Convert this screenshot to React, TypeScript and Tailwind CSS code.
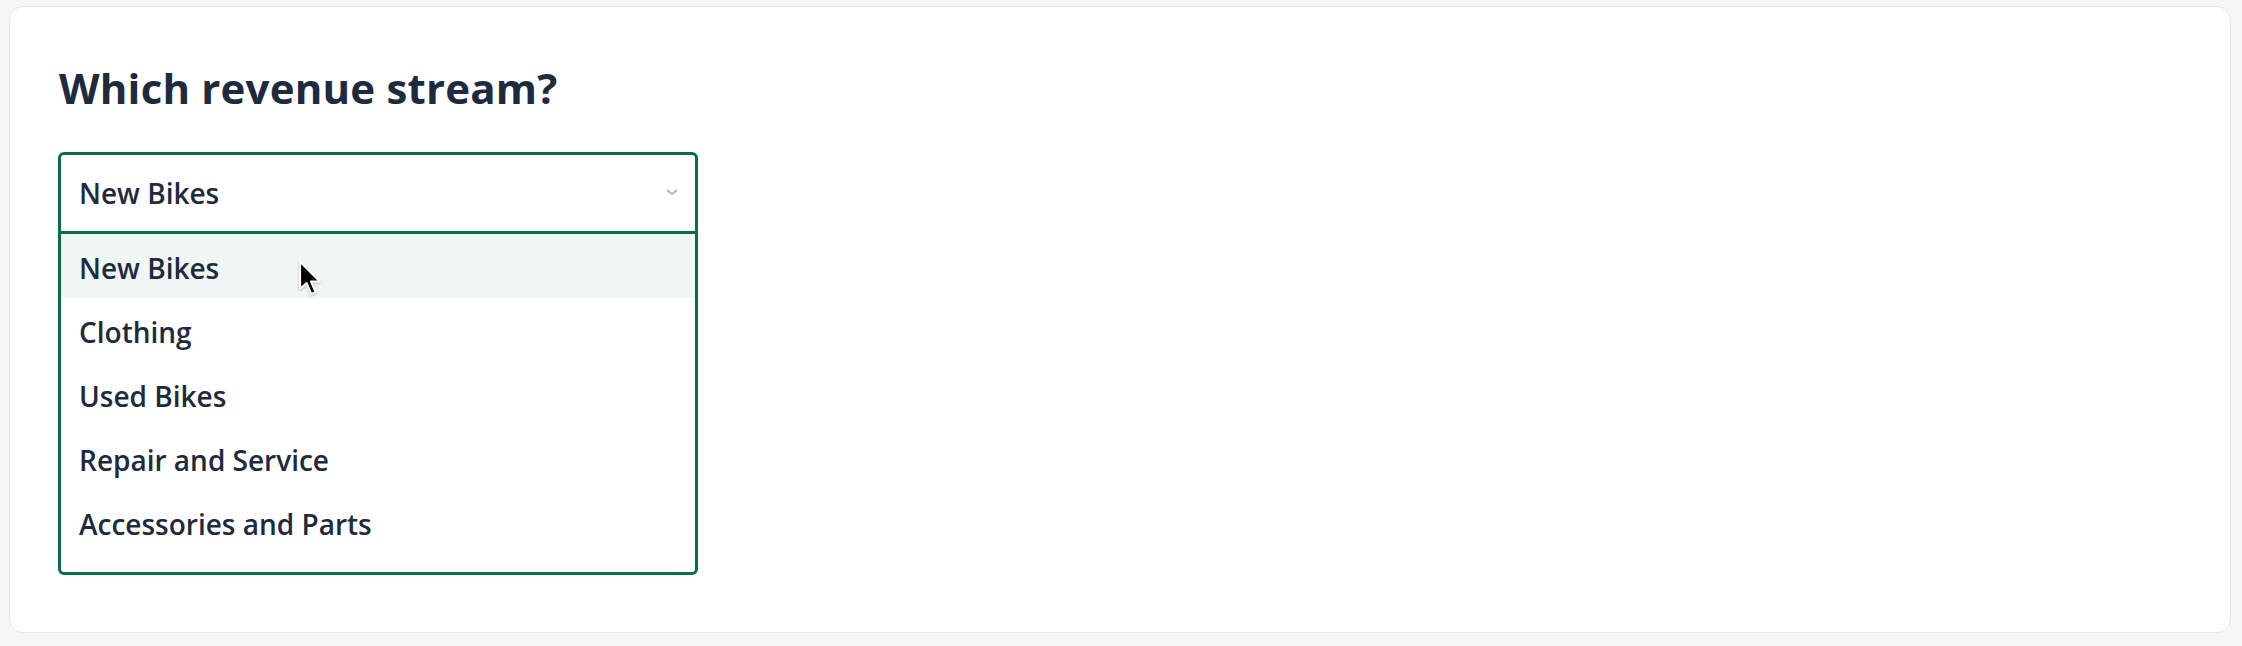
import React from "react";

const items = ["New Bikes", "Clothing", "Used Bikes", "Repair and Service", "Accessories and Parts"];

function Cursor() {
  return (
    <svg width="24" height="36" viewBox="0 0 13 20" className="absolute left-[237px] top-[26px]" style={{ filter: "drop-shadow(0.5px 1px 1px rgba(0,0,0,0.25))" }}>
      <polygon points="1,1 1,16 4.6,12.8 7.2,18.8 9.6,17.8 7,11.9 11.8,11.9" fill="#000" stroke="#fff" strokeWidth="1.1" strokeLinejoin="round" />
    </svg>
  );
}

export default function App() {
  return (
    <div className="w-[2242px] h-[646px] bg-[#f5f7f6] pt-[6px] pl-[9px]" style={{ fontFamily: "'Open Sans', 'Noto Sans', sans-serif" }}>
      <div className="w-[2222px] h-[627px] bg-white border border-[#e4e7e6] rounded-[14px] pt-[56px] pl-[48px]">
        <h1 className="pl-[1px] text-[42px] leading-[49px] font-bold text-[#1e2a3e] tracking-[0.2px]">Which revenue stream?</h1>
        <div className="mt-[40px] w-[640px] border-[3px] border-[#0a6b4d] rounded-[6px] bg-white">
          <div className="h-[79px] border-b-[3px] border-[#0a6b4d] flex items-center justify-between pl-[18px] pr-[17px]">
            <span className="text-[28px] font-semibold text-[#1e2a3e]">New Bikes</span>
            <svg width="12" height="7" viewBox="0 0 12 7" className="mt-[-2px]">
              <path d="M1.5 1.5 L6 5 L10.5 1.5" fill="none" stroke="#b3b9c0" strokeWidth="2" strokeLinecap="round" strokeLinejoin="round" />
            </svg>
          </div>
          <div className="pb-[18px]">
            {items.map((it, i) => (
              <div key={it} className={`relative h-[64px] flex items-center pl-[18px] pt-[4px] text-[28px] font-semibold text-[#1e2a3e] ${i === 0 ? "bg-[#f0f6f3]" : ""}`}>
                {it}
                {i === 0 && <Cursor />}
              </div>
            ))}
          </div>
        </div>
      </div>
    </div>
  );
}
